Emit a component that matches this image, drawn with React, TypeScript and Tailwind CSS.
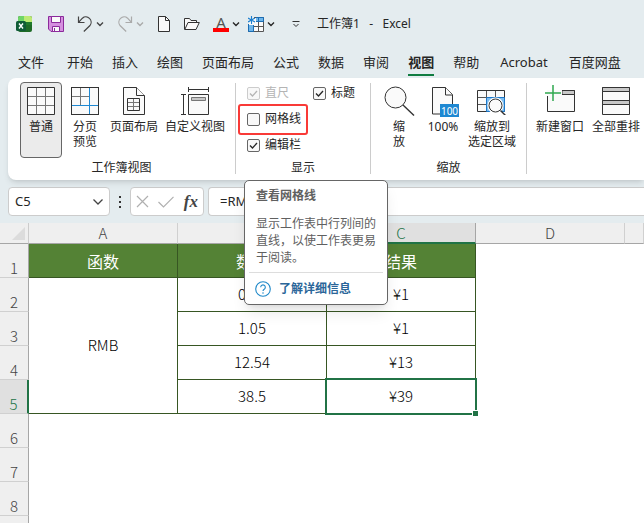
import React from "react";

const Chevron = ({ className = "" }: { className?: string }) => (
  <svg viewBox="0 0 8 8" className={`h-2 w-2 ${className}`} fill="none" stroke="currentColor" strokeWidth="1.4">
    <path d="M1 2.5 4 5.5 7 2.5" />
  </svg>
);

const ExcelLogo = () => (
  <svg viewBox="0 0 16 16" className="mr-[3px] h-4 w-4">
    <rect x="2" y="0" width="14" height="16" rx="2" fill="#1e6b26" />
    <path d="M4 0h5v6H2V2a2 2 0 0 1 2-2Z" fill="#6fd568" />
    <path d="M8 0h6a2 2 0 0 1 2 2v4H8Z" fill="#bdea74" />
    <path d="M8 6h8v3H8Z" fill="#1f7a2c" />
    <rect x="0" y="5" width="10" height="10" rx="1.5" fill="#0f5c36" />
    <path d="m3 7.5 4 5M7 7.5l-4 5" stroke="#fff" strokeWidth="1.4" />
  </svg>
);

const SaveIcon = () => (
  <svg viewBox="0 0 16 16" className="h-4 w-4" stroke="#8b2a9b" fill="#d58fdf">
    <path d="M.5.5h15v15H3L.5 13Z" />
    <path d="M3.5.5h9v6h-9Z" fill="#fafafa" />
    <path d="M4.5 10.5h7v5h-7Z" fill="#fafafa" />
    <path d="M6.5 12v3" />
  </svg>
);

const UndoIcon = () => (
  <svg viewBox="0 0 16 16" className="h-4 w-4" fill="none" stroke="currentColor" strokeWidth="1.2">
    <path d="M1.5.5v6h6M1.8 6.2l3.600-4A5.300 5.300 0 0 1 13 9.500L6.800 15.500" />
  </svg>
);

const PageIcon = () => (
  <svg viewBox="0 0 14 16" className="h-4 w-3.5" fill="#fafafa" stroke="#333">
    <path d="M1.5.5h7l4 4v11h-11Z" />
    <path d="M8.5.5v4h4" fill="none" />
  </svg>
);

const FolderIcon = () => (
  <svg viewBox="0 0 16 16" className="h-4 w-4" fill="#fafafa" stroke="#333">
    <path d="M.5 13.5v-11h5l1.5 2h5.5v2" />
    <path d="M.8 13.5 4 6.5h11.300l-3.300 7Z" />
  </svg>
);

const PasteTableIcon = () => (
  <svg viewBox="0 0 16 16" className="h-4 w-4" fill="none">
    <path d="M6 1.5h9.5v14H.5V8" fill="#fafafa" stroke="#555" />
    <path d="M8 2h7v3H8ZM1 9h4v6H1Z" fill="#6fb6ea" />
    <path d="M8 1.5h7.5v4H8M.5 8v7.5h5V9M10.5 1.5v4" stroke="#1b6db4" />
    <path d="M10.5 6v9.5M6 10.5h9.5" stroke="#555" />
    <path d="M3.5 0v8M0 2l7 4M7 2 0 6" stroke="#1b7fd0" strokeWidth="1.1" />
  </svg>
);

const NormalIcon = () => (
  <svg viewBox="0 0 28 28" className="h-7 w-7" fill="#fafafa" stroke="#333">
    <path d="M.5.5h27v27H.5Z" />
    <path d="M9.5 1v26M18.5 1v26M1 9.5h26M1 18.5h26" stroke="#777" />
  </svg>
);

const PageBreakIcon = () => (
  <svg viewBox="0 0 28 28" className="h-7 w-7" fill="none">
    <rect x="0.5" y="0.5" width="27" height="27" fill="#fafafa" stroke="#333" />
    <path d="M9.5 1v17M1 9.5h17" stroke="#777" />
    <rect x="18" y="1" width="1" height="26" fill="#1e88d2" />
    <rect x="1" y="18" width="26" height="1" fill="#1e88d2" />
  </svg>
);

const PageLayoutIcon = () => (
  <svg viewBox="0 0 22 28" className="h-7 w-[22px]" fill="#fafafa" stroke="#333">
    <path d="M.5.5h13l8 8v19H.5Z" />
    <path d="M13.5.5v8h8" />
    <path d="M4.5 11.5h12v12h-12Z" />
    <path d="M10.5 12v11M5 15.5h11M5 19.5h11" stroke="#777" />
  </svg>
);

const CustomViewIcon = () => (
  <svg viewBox="0 0 28 28" className="h-7 w-7" fill="none" stroke="#333">
    <path d="M7.5 2.5h20M7.5 0v5M27.5 0v5M2.5 7.5v20M0 7.5h5M0 27.5h5" />
    <path d="M7.5 7.5h20v20h-20Z" fill="#fafafa" />
    <path d="M10.5 10.5h14v3h-14Z" fill="#c8c8c8" stroke="#777" />
  </svg>
);

const ZoomIcon = () => (
  <svg viewBox="0 0 28 28" className="h-7 w-7 overflow-visible" fill="#fafafa" stroke="#333">
    <circle cx="10.5" cy="10.5" r="10.5" />
    <path d="m18 18 11 10.5" strokeWidth="1.4" />
  </svg>
);

const HundredIcon = () => (
  <svg viewBox="0 0 28 30" className="-mb-0.5 h-[30px] w-7 overflow-visible" fill="#fafafa" stroke="#333">
    <path d="M3.5.5h13l7 7v19.5h-20Z" />
    <path d="M16.5.5v7.500h7" />
    <rect x="11" y="17" width="19" height="13" fill="#1e88d2" stroke="none" />
    <text x="20.5" y="27.5" fontSize="10" textAnchor="middle" fill="#fff" stroke="none" fontFamily="Noto Sans">
      100
    </text>
  </svg>
);

const ZoomSelectionIcon = () => (
  <svg viewBox="0 0 30 28" className="h-7 w-[30px]" fill="none" stroke="#333">
    <path d="M.5 3.5h27v21H.5Z" fill="#fafafa" />
    <path d="M10 10h17v14H10Z" fill="#7dbdf0" stroke="none" />
    <path d="M9.5 4v20M18.5 4v6M1 10.5h9M1 17.5h9" stroke="#555" />
    <path d="M10 10.5h17.5v14H9.5v-14" stroke="#1e78c8" />
    <circle cx="18.5" cy="18.5" r="8" fill="#fff" stroke="none" />
    <circle cx="18.5" cy="18.5" r="6.5" fill="#fafafa" />
    <path d="m23.5 23.5 6 6" strokeWidth="1.4" />
  </svg>
);

const NewWindowIcon = () => (
  <svg viewBox="0 2 30 28" className="h-7 w-[30px] overflow-visible" fill="none" stroke="#333">
    <path d="M2.5 5.5h27v21h-27Z" fill="#fafafa" />
    <path d="M17 5.5h12.5v4H17Z" fill="#c8c8c8" />
    <path d="M0 0h17v10h-6v6H5v-5H0Z" fill="#fafafa" stroke="none" />
    <path d="M0 0h17v5H2v6H0Z" fill="#fff" stroke="none" />
    <path d="M0 8h16M8 0v16" stroke="#2fa84f" strokeWidth="1.500" />
  </svg>
);

const ArrangeIcon = () => (
  <svg viewBox="0 0 28 28" className="h-7 w-7" fill="#fafafa" stroke="#333">
    <path d="M.5.5h27v27H.5Z" />
    <path d="M.5.5h27v4H.5ZM.5 13.5h27v4H.5Z" fill="#c8c8c8" />
  </svg>
);

type ToolProps = {
  icon: React.ReactNode;
  label: string[];
  width: string;
  active?: boolean;
};

const Tool = ({ icon, label, width, active }: ToolProps) => (
  <button
    className={`flex h-[76px] shrink-0 flex-col items-center rounded border pt-1 text-xs leading-[15px] ${width} ${
      active ? "border-[#666] bg-[#ebebeb]" : "border-transparent"
    }`}
  >
    {icon}
    <span className="mt-1 whitespace-nowrap">
      {label.map((line) => (
        <span key={line} className="block">
          {line}
        </span>
      ))}
    </span>
  </button>
);

const Group = ({ title, className, children }: { title: string; className: string; children: React.ReactNode }) => (
  <section className={`relative flex h-[91px] shrink-0 flex-col justify-between border-r border-[#ccc] ${className}`}>
    {children}
    <h2 className="text-center text-xs leading-3">{title}</h2>
  </section>
);

type CheckProps = { label: string; checked?: boolean; disabled?: boolean };

const Check = ({ label, checked, disabled }: CheckProps) => (
  <label className={`flex h-[26px] items-center gap-[5px] text-xs ${disabled ? "text-[#b4b4b4]" : ""}`}>
    <span className="relative flex">
      <input
        type="checkbox"
        defaultChecked={checked}
        disabled={disabled}
        className="peer h-[13px] w-[13px] appearance-none rounded-[2px] border border-[#666] bg-[#f8f8f8] disabled:border-[#ccc]"
      />
      <svg
        viewBox="0 0 13 13"
        className="pointer-events-none absolute inset-0 hidden peer-checked:block"
        fill="none"
        stroke="currentColor"
        strokeWidth="1.3"
      >
        <path d="m3 6.5 2.5 2.5 4.500-5" />
      </svg>
    </span>
    {label}
  </label>
);

const Tooltip = () => (
  <div
    role="tooltip"
    className="absolute top-[97px] left-2 z-10 w-36 rounded-[5px] border border-[#666] bg-white px-1 text-xs text-[#606060] shadow-lg"
  >
    <h3 className="px-[7px] pt-[7px] leading-4 font-bold">查看网格线</h3>
    <p className="px-[7px] pt-[11px] pb-1.5 leading-[17px]">显示工作表中行列间的直线，以使工作表更易于阅读。</p>
    <a href="#help" className="flex h-8 items-center gap-2 border-t border-[#ddd] px-1.5 font-bold text-[#2b6699]">
      <svg viewBox="0 0 16 16" className="h-4 w-4" fill="none" stroke="#1e88c8" strokeWidth="1.1">
        <circle cx="8" cy="8" r="7.3" />
        <path d="M5.700 6.200a2.300 2.300 0 1 1 3.500 2C8.400 8.700 8 9.100 8 10M8 11.300v1.400" />
      </svg>
      了解详细信息
    </a>
  </div>
);

const tabs = ["文件", "开始", "插入", "绘图", "页面布局", "公式", "数据", "审阅", "视图", "帮助", "Acrobat", "百度网盘"];

const columns = ["A", "B", "C", "D", ""];

const rows = [
  ["0.85", "¥1"],
  ["1.05", "¥1"],
  ["12.54", "¥13"],
  ["38.5", "¥39"],
];

const rowHead = "border-r border-b border-r-[#a6a6a6] border-b-[#d0d0d0] align-bottom font-light leading-[18px]";
const cell = "border-r border-b border-[#375623] p-0 text-center";

const TitleBar = () => (
  <header className="flex h-12 shrink-0 items-center gap-[13px] pl-4">
    <ExcelLogo />
    <button aria-label="保存">
      <SaveIcon />
    </button>
    <button aria-label="撤消" className="flex items-center gap-[3px] text-[#444]">
      <UndoIcon />
      <Chevron />
    </button>
    <button aria-label="恢复" className="flex items-center gap-[3px] text-[#aaa]">
      <span className="-scale-x-100">
        <UndoIcon />
      </span>
      <Chevron />
    </button>
    <button aria-label="新建">
      <PageIcon />
    </button>
    <button aria-label="打开">
      <FolderIcon />
    </button>
    <div className="flex gap-2">
      <button aria-label="字体颜色" className="flex items-center gap-[3px]">
        <span className="flex h-4 w-4 items-center justify-center border-b-4 border-[#f00] pb-px text-[15px] leading-3 text-[#555]">
          A
        </span>
        <Chevron />
      </button>
      <button aria-label="插入表格" className="flex items-center gap-[3px]">
        <PasteTableIcon />
        <Chevron />
      </button>
    </div>
    <button aria-label="自定义快速访问工具栏" className="flex w-4 justify-center">
      <svg viewBox="0 0 8 8" className="h-2 w-2" fill="none" stroke="#333">
        <path d="M.5 1.5h7M1.500 4 4 6.500 6.500 4" />
      </svg>
    </button>
    <h1 className="text-xs whitespace-pre">工作簿1{"   "}-{"   "}Excel</h1>
  </header>
);

const Ribbon = () => (
  <div className="relative z-10 ml-2 flex h-[102px] shrink-0 rounded-l-lg bg-white pt-[5px] shadow-md">
    <Group title="工作簿视图" className="w-[228px]">
      <div className="-mt-px flex gap-0.5 pl-3">
        <Tool active width="w-[42px]" icon={<NormalIcon />} label={["普通"]} />
        <Tool width="w-[42px]" icon={<PageBreakIcon />} label={["分页", "预览"]} />
        <Tool width="w-[52px]" icon={<PageLayoutIcon />} label={["页面布局"]} />
        <Tool width="w-[66px]" icon={<CustomViewIcon />} label={["自定义视图"]} />
      </div>
    </Group>
    <Group title="显示" className="w-[135px]">
      <div className="-mt-[3px] grid grid-cols-[66px_1fr] pl-[11px]">
        <Check label="直尺" checked disabled />
        <Check label="标题" checked />
        <div className="relative col-span-2">
          <Check label="网格线" />
          <span className="pointer-events-none absolute -top-0.5 -left-[9px] h-[31px] w-[70px] rounded-[3px] border-2 border-[#f93a37]" />
        </div>
        <Check label="编辑栏" checked />
      </div>
      <Tooltip />
    </Group>
    <Group title="缩放" className="w-[156px]">
      <div className="-mt-px flex gap-0.5 pl-2">
        <Tool width="w-10" icon={<ZoomIcon />} label={["缩", "放"]} />
        <Tool width="w-11" icon={<HundredIcon />} label={["100%"]} />
        <Tool width="w-[50px]" icon={<ZoomSelectionIcon />} label={["缩放到", "选定区域"]} />
      </div>
    </Group>
    <div className="-mt-px flex gap-0.5 pl-1.5">
      <Tool width="w-[54px]" icon={<NewWindowIcon />} label={["新建窗口"]} />
      <Tool width="w-[54px]" icon={<ArrangeIcon />} label={["全部重排"]} />
    </div>
  </div>
);

const FormulaBar = () => (
  <div className="my-[7px] ml-2 flex h-[29px] shrink-0 items-stretch text-[13px]">
    <div className="flex w-[102px] items-center rounded border border-[#ccc] bg-white px-1.5">
      <input aria-label="名称框" defaultValue="C5" className="w-0 flex-1 outline-none" />
      <button aria-label="展开名称框">
        <svg viewBox="0 0 10 6" className="h-1.5 w-2.5" fill="none" stroke="#444" strokeWidth="1.3">
          <path d="m.5.5 4.5 4.5L9.500.5" />
        </svg>
      </button>
    </div>
    <div className="flex w-5 flex-col items-center justify-center gap-[3px]">
      <span className="h-0.5 w-0.5 bg-[#333]" />
      <span className="h-0.5 w-0.5 bg-[#333]" />
      <span className="h-0.5 w-0.5 bg-[#333]" />
    </div>
    <div className="flex w-[74px] items-center justify-between rounded border border-[#ccc] bg-white px-[5px]">
      <button aria-label="取消">
        <svg viewBox="0 0 13 13" className="h-[13px] w-[13px]" fill="none" stroke="#b0b0b0" strokeWidth="1.2">
          <path d="m1 1 11 11M12 1 1 12" />
        </svg>
      </button>
      <button aria-label="输入">
        <svg viewBox="0 0 16 12" className="h-3 w-4" fill="none" stroke="#b0b0b0" strokeWidth="1.2">
          <path d="m.5 6 5 5L15.500.8" />
        </svg>
      </button>
      <button aria-label="插入函数" className="font-['Liberation_Serif',serif] text-[17px] leading-4 font-bold text-[#444] italic">
        fx
      </button>
    </div>
    <input
      aria-label="编辑栏"
      defaultValue="=RMB(B5)"
      className="ml-1 min-w-0 flex-1 rounded-l border border-r-0 border-[#ccc] bg-white pl-[11px] outline-none"
    />
  </div>
);

const Sheet = () => (
  <div className="flex-1 overflow-hidden bg-white font-['Noto_Sans_CJK_SC',sans-serif] text-[15px] font-light text-black">
    <table className="w-full table-fixed border-separate border-spacing-0">
      <colgroup>
        <col className="w-[29px]" />
        <col className="w-[149px]" />
        <col className="w-[149px]" />
        <col className="w-[149px]" />
        <col className="w-[149px]" />
        <col />
      </colgroup>
      <thead className="bg-[#efefef] text-[#444]">
        <tr className="h-[21px] leading-[18px]">
          <th className="border-r border-b border-r-[#ccc] border-b-[#a6a6a6] p-0">
            <svg viewBox="0 0 13 13" className="mr-[3px] ml-auto h-[13px] w-[13px]" fill="#dcdcdc">
              <path d="M13 0v13H0Z" />
            </svg>
          </th>
          {columns.map((name) => (
            <th
              key={name}
              className={`border-r p-0 font-light ${
                name === "C"
                  ? "border-b-2 border-r-[#a6a6a6] border-b-[#217346] bg-[#e0e0e0] text-[#217346]"
                  : "border-b border-r-[#d0d0d0] border-b-[#a6a6a6]"
              }`}
            >
              {name}
            </th>
          ))}
        </tr>
      </thead>
      <tbody>
        <tr className="h-[34px]">
          <th className={`bg-[#efefef] p-0 text-[#444] ${rowHead}`}>1</th>
          {["函数", "数字", "结果"].map((name) => (
            <th key={name} className={`bg-[#548235] text-base font-normal text-white ${cell}`}>
              {name}
            </th>
          ))}
        </tr>
        {rows.map(([value, result], i) => (
          <tr key={value} className="h-[34px]">
            {i === 3 ? (
              <th className="border-r-2 border-b border-r-[#217346] border-b-[#d0d0d0] bg-[#e0e0e0] p-0 align-bottom leading-[18px] font-light text-[#217346]">
                5
              </th>
            ) : (
              <th className={`bg-[#efefef] p-0 text-[#444] ${rowHead}`}>{i + 2}</th>
            )}
            {i === 0 && (
              <td rowSpan={4} className={cell}>
                RMB
              </td>
            )}
            <td className={cell}>{value}</td>
            <td className={`relative ${cell}`}>
              {result}
              {i === 3 && (
                <>
                  <span className="absolute -inset-0.5 border-2 border-[#217346]" />
                  <span className="absolute -right-[3px] -bottom-[3px] h-1.5 w-1.5 border-t border-l border-white bg-[#217346]" />
                </>
              )}
            </td>
          </tr>
        ))}
        {["6", "7", "8", ""].map((n) => (
          <tr key={n} className="h-[34px]">
            <th className={`bg-[#efefef] p-0 text-[#444] ${rowHead}`}>{n}</th>
          </tr>
        ))}
      </tbody>
    </table>
  </div>
);

const App = () => {
  return (
    <div className="flex h-screen flex-col overflow-hidden bg-[#e4ecef] font-['Noto_Sans','Noto_Sans_CJK_SC',sans-serif] text-[#262626]">
      <TitleBar />
      <nav className="flex h-[30px] shrink-0 items-center gap-[19px] pl-[18px] text-[13px] whitespace-nowrap">
        {tabs.map((tab) => (
          <a
            key={tab}
            href="#ribbon"
            className={`border-b-2 leading-6 first:mr-1 ${tab === "Acrobat" ? "mx-0.5" : ""} ${
              tab === "视图" ? "border-[#107c41] font-bold" : "border-transparent"
            }`}
          >
            {tab}
          </a>
        ))}
      </nav>
      <Ribbon />
      <FormulaBar />
      <Sheet />
    </div>
  );
};

export default App;
